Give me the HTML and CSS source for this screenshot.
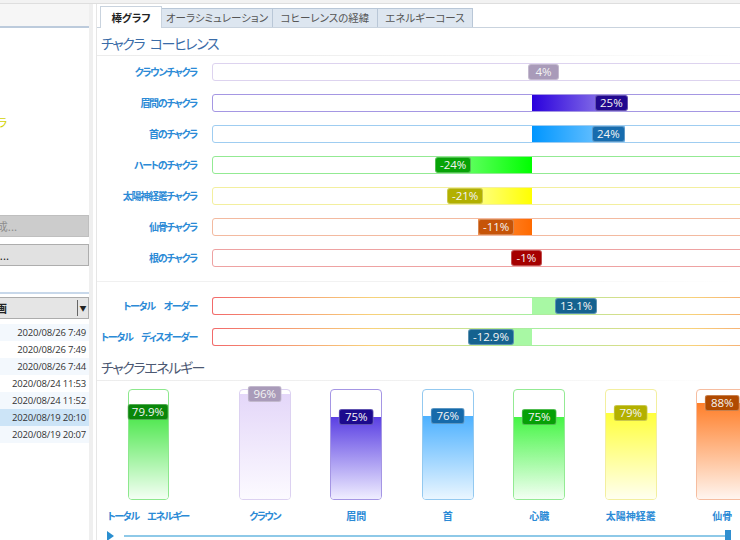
FILE: index.html
```html
<!DOCTYPE html>
<html lang="ja">
    <head>
        <meta charset="UTF-8">
        <title>チャクラ</title>
        <link rel="stylesheet" href="styles.css">
    </head>
    <body>
        <div class="topline"></div>
        <div class="main">
            <div class="side">
                <div class="side-hd"></div>
                <div class="side-body">
                    <div class="side-name">太陽神経叢チャクラ</div>
                    <div class="btn btn-off">レポート作成...</div>
                    <div class="btn btn-load">データ読込...</div>
                    <div class="side-line"></div>
                    <div class="combo">
                        <span class="combo-txt">測定履歴画</span>
                        <span class="combo-arrow">▼</span>
                    </div>
                    <ul class="list">
                        <li class="alt">2020/08/26 7:49</li>
                        <li>2020/08/26 7:49</li>
                        <li class="alt">2020/08/26 7:44</li>
                        <li>2020/08/24 11:53</li>
                        <li class="alt">2020/08/24 11:52</li>
                        <li class="sel">2020/08/19 20:10</li>
                        <li class="alt">2020/08/19 20:07</li>
                    </ul>
                </div>
            </div>
            <div class="split"></div>
            <div class="content">
                <div class="tabs">
                    <div class="tab on">棒グラフ</div>
                    <div class="tab t2">オーラシミュレーション</div>
                    <div class="tab t3">コヒーレンスの経緯</div>
                    <div class="tab t4">エネルギーコース</div>
                </div>

                <h2 class="sec-title">チャクラ&ensp;コーヒレンス</h2>
                <div class="hrows">
                    <div class="hlabel">クラウンチャクラ</div>
                    <div class="hbar crown">
                        <div class="half left"></div>
                        <div class="half right"><div class="fill" style="width:15px"></div></div>
                        <span class="badge" style="left:315px">4%</span>
                    </div>

                    <div class="hlabel">眉間のチャクラ</div>
                    <div class="hbar brow">
                        <div class="half left"></div>
                        <div class="half right"><div class="fill" style="width:94px"></div></div>
                        <span class="badge" style="left:382px">25%</span>
                    </div>

                    <div class="hlabel">首のチャクラ</div>
                    <div class="hbar neck">
                        <div class="half left"></div>
                        <div class="half right"><div class="fill" style="width:93px"></div></div>
                        <span class="badge" style="left:379px">24%</span>
                    </div>

                    <div class="hlabel">ハートのチャクラ</div>
                    <div class="hbar heart">
                        <div class="half left"><div class="fill" style="width:95px"></div></div>
                        <div class="half right"></div>
                        <span class="badge" style="left:222px">-24%</span>
                    </div>

                    <div class="hlabel">太陽神経叢チャクラ</div>
                    <div class="hbar solar">
                        <div class="half left"><div class="fill" style="width:84px"></div></div>
                        <div class="half right"></div>
                        <span class="badge" style="left:234px">-21%</span>
                    </div>

                    <div class="hlabel">仙骨チャクラ</div>
                    <div class="hbar sacral">
                        <div class="half left"><div class="fill" style="width:54px"></div></div>
                        <div class="half right"></div>
                        <span class="badge" style="left:265px">-11%</span>
                    </div>

                    <div class="hlabel">根のチャクラ</div>
                    <div class="hbar root">
                        <div class="half left"><div class="fill" style="width:4px"></div></div>
                        <div class="half right"></div>
                        <span class="badge" style="left:298px">-1%</span>
                    </div>
                </div>

                <div class="sep"></div>

                <div class="hrows">
                    <div class="hlabel">トータル　オーダー</div>
                    <div class="hbar total">
                        <div class="half left"></div>
                        <div class="half right"><div class="fill" style="width:34px"></div></div>
                        <span class="badge" style="left:342px">13.1%</span>
                    </div>

                    <div class="hlabel">トータル　ディスオーダー</div>
                    <div class="hbar total">
                        <div class="half left"><div class="fill" style="width:32px"></div></div>
                        <div class="half right"></div>
                        <span class="badge" style="left:255px">-12.9%</span>
                    </div>
                </div>

                <h2 class="sec-title gray">チャクラエネルギー</h2>
                <div class="vchart">
                    <div class="vcol first">
                        <div class="vbar total"><div class="vfill" style="height:79.9%"><span class="badge">79.9%</span></div></div>
                        <div class="vlabel kana">トータル　エネルギー</div>
                    </div>
                    <div class="vcol">
                        <div class="vbar crown"><div class="vfill" style="height:96%"><span class="badge">96%</span></div></div>
                        <div class="vlabel kana">クラウン</div>
                    </div>
                    <div class="vcol">
                        <div class="vbar brow"><div class="vfill" style="height:75%"><span class="badge">75%</span></div></div>
                        <div class="vlabel">眉間</div>
                    </div>
                    <div class="vcol">
                        <div class="vbar neck"><div class="vfill" style="height:76%"><span class="badge">76%</span></div></div>
                        <div class="vlabel">首</div>
                    </div>
                    <div class="vcol">
                        <div class="vbar heart"><div class="vfill" style="height:75%"><span class="badge">75%</span></div></div>
                        <div class="vlabel">心臓</div>
                    </div>
                    <div class="vcol">
                        <div class="vbar solar"><div class="vfill" style="height:79%"><span class="badge">79%</span></div></div>
                        <div class="vlabel">太陽神経叢</div>
                    </div>
                    <div class="vcol">
                        <div class="vbar sacral"><div class="vfill" style="height:88%"><span class="badge">88%</span></div></div>
                        <div class="vlabel">仙骨</div>
                    </div>
                </div>

                <div class="slider">
                    <span class="play"></span>
                    <span class="track"></span>
                    <span class="thumb"></span>
                </div>
            </div>
        </div>
    </body>
</html>
```

FILE: styles.css
```css
* {
    box-sizing: border-box;
}
body {
    margin: 0;
    width: 740px;
    height: 540px;
    overflow: hidden;
    background: #fff;
    color: #333;
    font-family: "Noto Sans CJK JP", "Open Sans", sans-serif;
    font-feature-settings: "palt";
}
.topline {
    height: 4px;
    background: #f2f2f2;
    border-bottom: 1px solid #dedede;
}
.main {
    display: flex;
    height: 536px;
}

/* left panel */
.side {
    width: 89px;
    flex: none;
    overflow: hidden;
}
.side-hd {
    height: 24px;
    background: #f6f6f6;
    border-bottom: 2px solid #bccbdc;
}
.side-body {
    width: 190px;
    margin-left: -101px;
}
.side-name {
    margin-top: 87px;
    padding-right: 82px;
    text-align: right;
    font-size: 11px;
    line-height: 14px;
    color: #d2d200;
    white-space: nowrap;
}
.btn {
    height: 22px;
    display: flex;
    align-items: center;
    justify-content: flex-end;
    font-size: 11px;
    white-space: nowrap;
    background: #e1e1e1;
    border: 1px solid #adadad;
}
.btn-off {
    margin-top: 86px;
    padding-right: 71px;
    background: #cccccc;
    border-color: #bfbfbf;
    color: #8c8c8c;
}
.btn-load {
    margin-top: 7px;
    padding-right: 79px;
    color: #222;
}
.side-line {
    margin-top: 26px;
    height: 2px;
    background: #c8d8ea;
}
.combo {
    margin-top: 3px;
    height: 22px;
    display: flex;
    background: #e5e5e5;
    border: 1px solid #acacac;
}
.combo-txt {
    flex: 1;
    text-align: right;
    padding-right: 70px;
    font-size: 11px;
    font-weight: bold;
    line-height: 20px;
    color: #222;
    white-space: nowrap;
}
.combo-arrow {
    width: 11px;
    margin: 2px 0;
    border-left: 1px solid #666;
    font-size: 7px;
    line-height: 16px;
    text-align: center;
    color: #222;
}
.list {
    margin: 5px 0 0;
    padding: 0;
    list-style: none;
}
.list li {
    height: 17px;
    line-height: 17px;
    padding-right: 3px;
    text-align: right;
    font-family: "Open Sans", sans-serif;
    font-size: 9.5px;
    letter-spacing: -0.2px;
    color: #333;
}
.list li.alt {
    background: #f3f8fd;
}
.list li.sel {
    background: #cce4f7;
}
.split {
    width: 8px;
    flex: none;
    background: linear-gradient(to right, #efefef 0, #efefef 4px, #fff 4px, #fff 7px, #e6e6e6 7px);
}

/* right panel */
.content {
    flex: 1;
    overflow: hidden;
}
.tabs {
    height: 24px;
    display: flex;
    align-items: flex-end;
    padding-left: 3px;
    border-bottom: 1px solid #c9d3de;
}
.tab {
    height: 19px;
    line-height: 18px;
    text-align: center;
    font-size: 10.5px;
    color: #555;
    background: #dde6f0;
    border: 1px solid #b9c7d7;
    border-bottom: none;
    border-left: none;
}
.tab.on {
    width: 62px;
    height: 22px;
    line-height: 21px;
    margin-bottom: -1px;
    background: #fff;
    border-left: 1px solid #c9d3de;
    border-color: #c9d3de;
    font-weight: bold;
    color: #222;
}
.t2 {
    width: 111px;
}
.t3 {
    width: 105px;
}
.t4 {
    width: 95px;
}
.sec-title {
    margin: 5px 0 0;
    padding: 0 0 2px 4px;
    font-size: 14px;
    font-weight: normal;
    line-height: 20px;
    letter-spacing: -1.4px;
    word-spacing: 4px;
    color: #3a6ca8;
    border-bottom: 1px solid #eee;
    border-image: linear-gradient(to right, #ececec, #f2f2f2 60%, #fff) 1;
}
.sec-title.gray {
    margin-top: 11px;
    padding-bottom: 3px;
    color: #4c5872;
}
.hrows {
    margin-top: 7px;
    display: grid;
    grid-template-columns: 100px 640px;
    grid-auto-rows: 18px;
    column-gap: 15px;
    row-gap: 13px;
}
.hlabel {
    text-align: right;
    font-size: 10px;
    font-weight: bold;
    line-height: 18px;
    letter-spacing: -1.3px;
    color: #2b8ad6;
    white-space: nowrap;
}
.hbar {
    position: relative;
    display: flex;
    border: 1px solid #ccc;
    border-radius: 3px;
}
.half {
    flex: 1;
    display: flex;
}
.half.left {
    justify-content: flex-end;
}
.fill {
    height: 100%;
}
.badge {
    position: absolute;
    height: 16px;
    padding: 0 4px;
    border-radius: 3px;
    border: 1px solid rgba(255, 255, 255, 0.3);
    font-family: "Open Sans", sans-serif;
    font-size: 11.5px;
    line-height: 14px;
    color: #f4f4f4;
    white-space: nowrap;
}
.hbar .badge {
    top: 50%;
    min-width: 31px;
    text-align: center;
    transform: translateY(-50%);
}
.sep {
    margin-top: 14px;
    height: 1px;
    background: linear-gradient(to right, #f0f0f0, #f3f3f3 60%, #fff);
}
.sep + .hrows {
    margin-top: 15px;
}

/* colours per chakra */
.hbar.crown { border-color: #ddd3ef; }
.crown .fill { background: #f3effb; }
.crown .badge { background: #a99bb9; }
.hbar.brow { border-color: #a597e3; }
.brow .fill { background: linear-gradient(to right, #2a00dd, #a596ea); }
.brow .badge { background: #21088f; }
.hbar.neck { border-color: #9fcdf1; }
.neck .fill { background: linear-gradient(to right, #0096ff, #8dd0ff); }
.neck .badge { background: #176cae; }
.hbar.heart { border-color: #93ea93; }
.heart .fill { background: linear-gradient(to right, #8cff8c, #00ff00); }
.heart .badge { background: #07a307; }
.hbar.solar { border-color: #f3ef9f; }
.solar .fill { background: linear-gradient(to right, #ffffc8, #ffff00); }
.solar .badge { background: #b2b000; }
.hbar.sacral { border-color: #f3baa0; }
.sacral .fill { background: linear-gradient(to right, #ff9a50, #ff6a00); }
.sacral .badge { background: #c65408; }
.hbar.root { border-color: #eea2a2; }
.root .fill { background: #d00000; }
.root .badge { background: #a50000; }
.hbar.total {
    border: 1px solid transparent;
    background: linear-gradient(#fff, #fff) padding-box, linear-gradient(to right, #f26a6a, #f8d27a 25%, #a8eea0 50%, #f8d27a 75%, #f26a6a) border-box;
}
.hbar.total .fill { background: #a8f8a4; }
.hbar.total .badge { background: #15628f; }

/* vertical chart */
.vchart {
    margin-top: 8px;
    display: flex;
    padding-left: 10px;
}
.vcol {
    width: 91.5px;
    flex: none;
    display: flex;
    flex-direction: column;
    align-items: center;
}
.vcol.first {
    width: 82px;
    margin-right: 30px;
}
.vbar {
    width: 52px;
    height: 111px;
    display: flex;
    flex-direction: column;
    justify-content: flex-end;
    border: 1px solid #ccc;
    border-radius: 4px;
}
.first .vbar {
    width: 41px;
}
.vfill {
    position: relative;
    border-radius: 0 0 3px 3px;
}
.vfill .badge {
    top: 0;
    left: 50%;
    height: 16px;
    line-height: 14px;
    padding: 0 5px;
    transform: translate(-50%, -50%);
}
.first .vfill .badge {
    width: 41px;
    padding: 0;
    text-align: center;
}
.vlabel {
    margin-top: 9px;
    font-size: 10px;
    font-weight: bold;
    line-height: 14px;
    color: #2b8ad6;
    white-space: nowrap;
}
.vlabel.kana {
    letter-spacing: -1.4px;
}
.vbar.total { border-color: #8de88d; }
.vbar.total .vfill { background: linear-gradient(#46e646, #f4fff4); }
.vbar.total .badge { background: #0a870a; }
.vbar.crown { border-color: #dcd1f1; }
.vbar.crown .vfill { background: linear-gradient(#e4d7f9, #fcfaff); }
.vbar.brow { border-color: #a596e4; }
.vbar.brow .vfill { background: linear-gradient(#5a3fe3, #efedff); }
.vbar.brow .badge { background: #1c0a8e; }
.vbar.neck { border-color: #93c9f0; }
.vbar.neck .vfill { background: linear-gradient(#4db1ff, #eaf6ff); }
.vbar.neck .badge { background: #166aaa; }
.vbar.heart { border-color: #93ea93; }
.vbar.heart .vfill { background: linear-gradient(#45f545, #f3fff3); }
.vbar.heart .badge { background: #06a006; }
.vbar.solar { border-color: #f3ef9f; }
.vbar.solar .vfill { background: linear-gradient(#ffff3c, #fffff0); }
.vbar.solar .badge { background: #b3b000; }
.vbar.sacral { border-color: #f6bda0; }
.vbar.sacral .vfill { background: linear-gradient(#ff7f2a, #fff5ef); }
.vbar.sacral .badge { background: #b04a00; }

/* slider */
.slider {
    margin-top: 7px;
    padding-left: 10px;
    display: flex;
    align-items: center;
    height: 11px;
}
.play {
    width: 0;
    height: 0;
    border-top: 5px solid transparent;
    border-bottom: 5px solid transparent;
    border-left: 7px solid #2a8fd0;
}
.track {
    width: 601px;
    height: 2px;
    margin-left: 10px;
    background: #8ec9e8;
}
.thumb {
    width: 6px;
    height: 11px;
    background: #2f8fd0;
}
```
